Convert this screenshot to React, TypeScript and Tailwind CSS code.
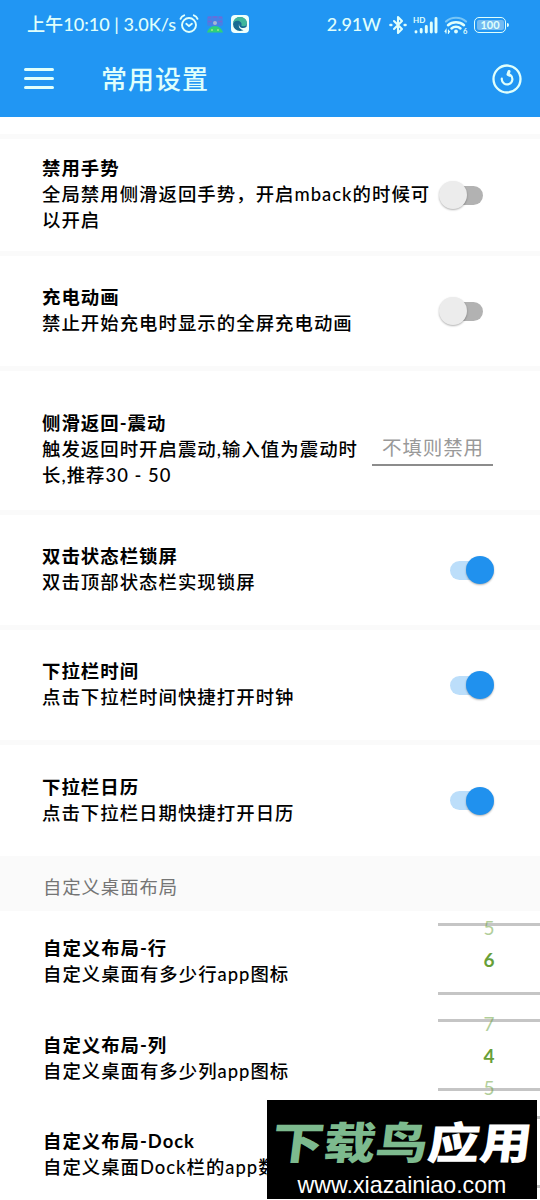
import React, { useState } from 'react';

type Setting = {
  id: string;
  title: string;
  desc: string;
  enabled: boolean;
  height: string;
  input?: boolean;
};

const settings: Setting[] = [
  { id: 'gesture', title: '禁用手势', desc: '全局禁用侧滑返回手势，开启mback的时候可以开启', enabled: false, height: 'h-[117px]' },
  { id: 'charge', title: '充电动画', desc: '禁止开始充电时显示的全屏充电动画', enabled: false, height: 'h-[115px]' },
  { id: 'vibrate', title: '侧滑返回-震动', desc: '触发返回时开启震动,输入值为震动时长,推荐30 - 50', enabled: false, height: 'h-[144px]', input: true },
  { id: 'lock', title: '双击状态栏锁屏', desc: '双击顶部状态栏实现锁屏', enabled: true, height: 'h-[115px]' },
  { id: 'clock', title: '下拉栏时间', desc: '点击下拉栏时间快捷打开时钟', enabled: true, height: 'h-[115px]' },
  { id: 'calendar', title: '下拉栏日历', desc: '点击下拉栏日期快捷打开日历', enabled: true, height: 'h-[116px]' }
];

const layouts = [
  { title: '自定义布局-行', desc: '自定义桌面有多少行app图标', values: ['5', '6', ''] },
  { title: '自定义布局-列', desc: '自定义桌面有多少列app图标', values: ['7', '4', '5'] },
  { title: '自定义布局-Dock', desc: '自定义桌面Dock栏的app数量', values: ['', '', ''] }
];

const StatusBar = () => (
  <div className="flex h-12 items-center justify-between pl-[27px] pr-[31px] pt-px font-medium">
    <div className="flex items-center">
      <span className="w-[150px] whitespace-nowrap text-[18.1px]">上午10:10 | 3.0K/s</span>
      {/* Alarm */}
      <svg className="ml-[2px] h-5 w-5" viewBox="0 0 20 20" fill="none" stroke="currentColor" strokeWidth="1.9" strokeLinecap="round">
        <circle cx="10" cy="11" r="7" />
        <path d="M1.500 4.800C2.200 3 3.400 1.900 5.200 1.300M18.500 4.800C17.800 3 16.600 1.900 14.800 1.300M7.300 9.800l2.700 2.300 2.900-2.300" />
      </svg>
      <svg className="ml-[7px] h-[18px] w-[18px]" viewBox="0 0 18 18">
        <rect x="1" y="1" width="16" height="10" rx="2" fill="#4581e6" />
        <path d="M2 2.500h3M7 2h4M13 2.500h3M2 6.500h4M12 6.500h4" stroke="#6c6bd8" strokeWidth="1.600" />
        <path d="M1 17.500C2 14 5 11 9 11s7 3 8 6.500Z" fill="#2fd07a" />
        <circle cx="9" cy="8" r="2" fill="#a9b5d4" />
        <circle cx="6" cy="15" r="1" fill="#9bea86" />
        <circle cx="12" cy="15" r="1" fill="#9bea86" />
      </svg>
      <svg className="ml-[7px] h-[18px] w-[18px]" viewBox="0 0 18 18">
        <rect width="18" height="18" rx="4" fill="#effffb" />
        <circle cx="9" cy="9" r="7" fill="#176b91" />
        <path d="M2 8.500C2.500 4.500 5.500 2 9 2c4.500 0 7 3.200 7 6 0 2.200-1.600 3.600-4 3.300-1.400-.2-2-.8-1.500-1.500C11 7.500 8.500 5.500 6 5.800 4 6 2.600 7.200 2 8.500Z" fill="#3fb79c" />
        <path d="M8.300 8.300c-1.300 4.200 3.500 6.200 7.200 3.700l2 2.200c-4.500 2.300-11.500.3-9.200-5.900Z" fill="#effffb" />
      </svg>
    </div>

    <div className="flex items-center">
      <span className="text-[18px]">2.91W</span>
      {/* Bluetooth */}
      <svg className="ml-[8px] h-5 w-[18px]" viewBox="0 0 18 20" fill="none" stroke="currentColor" strokeWidth="2.100" strokeLinejoin="round" strokeLinecap="round">
        <path d="M5 6l8 8-4 4V2l4 4-8 8" />
        <path d="M1.500 10h.8M15.700 10h.8" strokeWidth="2.600" />
      </svg>
      <svg className="ml-[6px] h-[18px] w-[25px]" viewBox="0 0 25 18" fill="currentColor">
        <path d="M3 15.700v.3M8.200 13.500V16M13.300 10.500V16M18.300 7v9M23 2.500V16" stroke="currentColor" strokeWidth="2.900" strokeLinecap="round" />
        <text x="0" y="7" fontSize="8" fontWeight="700" fontFamily="Lato">HD</text>
      </svg>
      {/* Wifi */}
      <svg className="ml-[6px] h-[18px] w-[24px]" viewBox="0 0 24 18" fill="none" stroke="currentColor" strokeLinecap="round">
        <path d="M2 5.500C7.500.500 16.500.500 22 5.500" strokeWidth="2.200" opacity=".45" />
        <path d="M4 9.200C8.500 5.200 15.500 5.200 20 9.200M7.500 12.500c2.500-2.300 6.500-2.300 9 0" strokeWidth="2.500" />
        <circle cx="12" cy="15.500" r="1.900" fill="currentColor" stroke="none" />
        <path d="M2 17v-3l-1 1.500M4.500 14v3l1-1.500" strokeWidth="1.200" />
        <text x="19" y="17.500" fontSize="7.500" fontWeight="700" fontFamily="Lato" fill="currentColor" stroke="none">6</text>
      </svg>
      <div className="ml-[6px] flex items-center">
        <div className="flex h-[16px] w-[32px] items-center justify-center rounded-[5px] border-[1.500px] border-current">
          <span className="flex h-[10px] w-[27px] items-center justify-center rounded-[2px] bg-[#72baf2] text-[11px] font-bold leading-none">100</span>
        </div>
        <div className="ml-px h-1 w-[2px] rounded-r bg-current" />
      </div>
    </div>
  </div>
);

const Toggle = ({ checked, onChange }: { checked: boolean; onChange: () => void }) => (
  <button
    role="switch"
    aria-checked={checked}
    onClick={onChange}
    className={`flex h-7 w-[55px] shrink-0 items-center ${checked ? 'justify-end' : 'justify-start'}`}
  >
    {checked && <span className="-mr-4 h-[19px] w-8 rounded-full bg-[#bcdefa]" />}
    <span className={`z-10 size-7 rounded-full shadow-[0_1px_2px_rgba(0,0,0,0.3)] ${checked ? 'bg-[#2091ee]' : 'bg-[#ececec]'}`} />
    {!checked && <span className="-ml-4 h-[19px] w-8 rounded-full bg-[#b2b2b2]" />}
  </button>
);

const NumberPicker = ({ values }: { values: string[] }) => (
  <div className="relative mb-px h-[72px] w-[102px] shrink-0 border-y-[3px] border-[#c5c5c5] text-center text-[19px] leading-[32px] text-[#689f38]">
    <span className="absolute inset-x-0 -top-[14px] opacity-50">{values[0]}</span>
    <span className="absolute inset-x-0 top-[18px] font-bold">{values[1]}</span>
    <span className="absolute inset-x-0 top-[50px] opacity-50">{values[2]}</span>
  </div>
);

const App = () => {
  const [items, setItems] = useState(settings);

  const toggle = (id: string) => {
    setItems(items.map(item => (item.id === id ? { ...item, enabled: !item.enabled } : item)));
  };

  return (
    <div className="relative h-[1200px] w-[540px] overflow-hidden bg-white font-[Lato,'Noto_Sans_CJK_SC',sans-serif] text-black">
      {/* Header */}
      <header className="h-[117px] bg-[#2196f3] text-[#e0fffb]">
        <StatusBar />
        <div className="flex h-[61px] items-center pl-6 pr-[18px]">
          <button className="flex w-[30px] flex-col gap-[6px]">
            <span className="h-[3px] rounded-full bg-current" />
            <span className="h-[3px] rounded-full bg-current" />
            <span className="h-[3px] rounded-full bg-current" />
          </button>
          <h1 className="ml-[47px] flex-1 text-[26px] font-medium leading-none tracking-[1px]">常用设置</h1>
          <svg className="size-[30px]" viewBox="0 0 30 30" fill="none" stroke="currentColor" strokeLinecap="round">
            <circle cx="15" cy="15" r="13.500" strokeWidth="2.300" />
            <path d="M9.800 14.500a5.300 5.300 0 1 0 8.500-3.600l-2.300-1" strokeWidth="2.200" />
            <path d="M17 7.500l-1 3 1.500.8" strokeWidth="3" strokeLinejoin="round" />
          </svg>
        </div>
      </header>

      <main className="pt-[17px]">
        {items.map(item => (
          <section
            key={item.id}
            className={`flex items-center border-t-[5px] border-[#fafafa] pl-[42px] pr-[46px] ${item.height}`}
          >
            <div className={`flex-1 text-[18.4px] leading-[26px] tracking-[1.03px] ${item.input ? 'pt-[17px]' : 'pb-[2px]'}`}>
              <h2 className="font-bold">{item.title}</h2>
              <p className={item.input ? 'w-[322px] font-medium' : '-mr-2 font-medium'}>{item.desc}</p>
            </div>
            {item.input ? (
              <input
                placeholder="不填则禁用"
                className="mr-px mt-[14px] h-[36px] w-[121px] border-b-2 border-[#8c8c8c] px-[10px] pt-[2px] text-[19.500px] tracking-[0.9px] placeholder:text-[#999]"
              />
            ) : (
              <Toggle checked={item.enabled} onChange={() => toggle(item.id)} />
            )}
          </section>
        ))}

        <div className="flex h-[55px] items-center bg-[#fafafa] pl-[43px] pt-[8px] text-[18.4px] tracking-[0.9px] text-[#757575]">
          自定义桌面布局
        </div>

        {layouts.map(layout => (
          <section key={layout.title} className="flex h-[96.500px] items-center justify-between pl-[43px]">
            <div className="whitespace-nowrap pt-[4px] text-[18.4px] leading-[26px] tracking-[1px]">
              <h2 className="font-bold">{layout.title}</h2>
              <p className="font-medium">{layout.desc}</p>
            </div>
            <NumberPicker values={layout.values} />
          </section>
        ))}
      </main>

      {/* Site banner */}
      <div className="absolute left-[267px] top-[1100px] flex h-[99px] w-[270px] flex-col items-center bg-black text-white">
        <div className="mt-[15px] -skew-x-6 scale-y-[0.84] whitespace-nowrap text-[52px] font-black leading-[54px]">
          <span className="text-[#7dba8e]">下载鸟</span>应用
        </div>
        <div className="mt-[3px] font-['Liberation_Sans'] text-[23.200px] leading-[26px]">www.xiazainiao.com</div>
      </div>
    </div>
  );
};

export default App;
